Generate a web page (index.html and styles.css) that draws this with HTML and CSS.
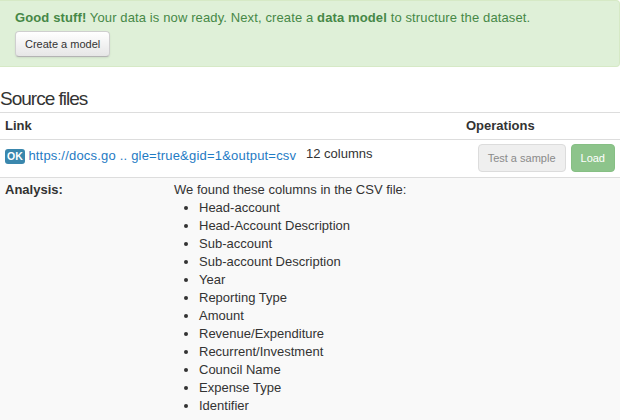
FILE: index.html
```html
<!DOCTYPE html>
<html>
<head>
<meta charset="utf-8">
<link rel="stylesheet" href="styles.css">
</head>
<body>
<div class="page">
  <div class="alert">
    <div class="alert-text"><strong>Good stuff!</strong> Your data is now ready. Next, create a <strong>data model</strong> to structure the dataset.</div>
    <button class="btn btn-default">Create a model</button>
  </div>

  <h2 class="section-title">Source files</h2>

  <table class="sources">
    <colgroup>
      <col class="col-link">
      <col class="col-info">
      <col class="col-ops">
    </colgroup>
    <thead>
      <tr>
        <th>Link</th>
        <th></th>
        <th>Operations</th>
      </tr>
    </thead>
    <tbody>
      <tr class="source-row">
        <td class="link-cell"><span class="badge">OK</span> <a class="src-link" href="#">https://docs.go .. gle=true&amp;gid=1&amp;output=csv</a></td>
        <td class="info-cell">12 columns</td>
        <td class="ops-cell">
          <div class="ops">
            <button class="btn btn-disabled">Test a sample</button>
            <button class="btn btn-success-disabled">Load</button>
          </div>
        </td>
      </tr>
      <tr class="analysis-row">
        <td colspan="3">
          <div class="analysis">
            <div class="analysis-label">Analysis:</div>
            <div class="analysis-body">
              <div>We found these columns in the CSV file:</div>
              <ul class="columns">
                <li>Head-account</li>
                <li>Head-Account Description</li>
                <li>Sub-account</li>
                <li>Sub-account Description</li>
                <li>Year</li>
                <li>Reporting Type</li>
                <li>Amount</li>
                <li>Revenue/Expenditure</li>
                <li>Recurrent/Investment</li>
                <li>Council Name</li>
                <li>Expense Type</li>
                <li>Identifier</li>
              </ul>
            </div>
          </div>
        </td>
      </tr>
    </tbody>
  </table>
</div>
</body>
</html>
```

FILE: styles.css
```css
html, body {
  margin: 0;
  padding: 0;
  background: #ffffff;
}

body {
  font-family: "Liberation Sans", Arial, Helvetica, sans-serif;
  font-size: 13px;
  line-height: 18px;
  color: #333333;
}

.page {
  width: 620px;
}

.alert {
  background: #dff0d8;
  border: 1px solid #d6e9c6;
  border-left: none;
  border-radius: 0 4px 4px 0;
  color: #468847;
  padding: 8px 35px 9px 15px;
}

.alert-text {
  line-height: 18px;
  letter-spacing: 0.12px;
}

.alert strong {
  font-weight: bold;
}

.btn {
  display: inline-block;
  font-family: "Liberation Sans", Arial, Helvetica, sans-serif;
  font-size: 11px;
  line-height: 16px;
  border-radius: 4px;
  border: 1px solid #cccccc;
  cursor: pointer;
  margin: 0;
}

.btn-default {
  margin-top: 4px;
  padding: 4px 9px;
  color: #333333;
  background: linear-gradient(#ffffff, #e6e6e6);
  border-color: #cfcfcf #cfcfcf #b3b3b3;
  box-shadow: inset 0 1px 0 rgba(255,255,255,.2), 0 1px 2px rgba(0,0,0,.08);
}

.btn-disabled {
  padding: 5px 9px;
  background: #efefef;
  color: #8a8a8a;
  border-color: #dcdcdc;
}

.btn-success-disabled {
  padding: 5px 9px;
  background: #8dc48b;
  color: #ffffff;
  border-color: #86bf84;
}

.section-title {
  font-family: "Liberation Sans", Arial, sans-serif;
  font-weight: normal;
  font-size: 19px;
  letter-spacing: -1px;
  line-height: 24px;
  color: #333333;
  margin: 20px 0 1px 0;
}

.sources {
  width: 620px;
  border-collapse: collapse;
  table-layout: fixed;
}

.col-link { width: 301px; }
.col-info { width: 160px; }
.col-ops { width: 159px; }

.sources th,
.sources td {
  padding: 4px 5px;
  text-align: left;
  vertical-align: top;
  border-top: 1px solid #dddddd;
}

.sources th {
  font-weight: bold;
}

.source-row td {
  padding-top: 5px;
}

.source-row .ops-cell {
  padding-top: 4px;
  padding-bottom: 5px;
}

.link-cell {
  padding-top: 7px !important;
  white-space: nowrap;
}

.badge {
  display: inline-block;
  background: #3a87ad;
  color: #ffffff;
  font-weight: bold;
  font-size: 10.5px;
  line-height: 15px;
  height: 15px;
  padding: 0 2px;
  border-radius: 3px;
  letter-spacing: 0;
}

.src-link {
  color: #1f7bc4;
  text-decoration: none;
  letter-spacing: 0.2px;
}

.ops {
  display: flex;
  justify-content: flex-end;
  gap: 5px;
}

.analysis-row td {
  background: #f9f9f9;
  padding-top: 3px;
  padding-bottom: 20px;
}

.analysis {
  display: grid;
  grid-template-columns: 169px 1fr;
}

.analysis-label {
  font-weight: bold;
}

.columns {
  margin: 0 0 10px 25px;
  padding: 0;
}
```
